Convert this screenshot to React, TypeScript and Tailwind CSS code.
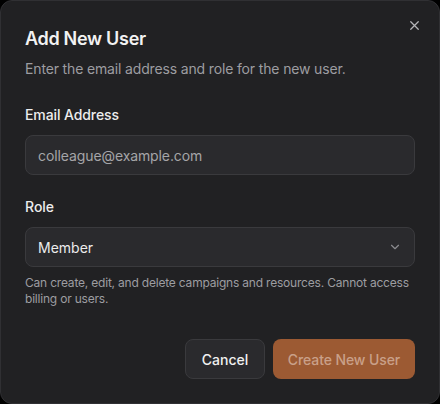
import React from "react";

export default function App() {
  return (
    <div className="w-[440px] h-[404px] bg-black" style={{ fontFamily: "Inter, 'Noto Sans', sans-serif" }}>
      <div className="relative w-full h-full rounded-[12px] border border-[#303033] bg-[#212123] px-6 pt-6 pb-6 flex flex-col">
        <button className="absolute right-[17px] top-[17px] text-[#b5b5b8]">
          <svg width="15" height="15" viewBox="0 0 24 24" fill="none" stroke="currentColor" strokeWidth="2" strokeLinecap="round">
            <path d="M18 6 6 18M6 6l12 12" />
          </svg>
        </button>
        <h2 className="text-[18px] leading-[28px] font-semibold text-[#f2f2f2] tracking-[-0.3px]">Add New User</h2>
        <p className="mt-[6px] text-[14px] leading-[20px] text-[#9d9da1] tracking-[-0.15px]">Enter the email address and role for the new user.</p>
        <label className="mt-[26px] text-[14px] leading-[20px] font-medium text-[#ededed] tracking-[-0.1px]">Email Address</label>
        <div className="mt-[10px] h-[40px] rounded-[8px] border border-[#3a3a3d] bg-[#2a2a2d] px-[12px] flex items-center text-[14px] text-[#a5a5a8] tracking-[-0.1px]">
          colleague@example.com
        </div>
        <label className="mt-[22px] text-[14px] leading-[20px] font-medium text-[#ededed]">Role</label>
        <div className="mt-[10px] h-[40px] rounded-[8px] border border-[#3a3a3d] bg-[#2a2a2d] px-[12px] flex items-center justify-between text-[14px] text-[#ececec]">
          <span>Member</span>
          <svg width="14" height="14" viewBox="0 0 24 24" fill="none" stroke="#8b8b8f" strokeWidth="2" strokeLinecap="round" strokeLinejoin="round">
            <path d="m6 9 6 6 6-6" />
          </svg>
        </div>
        <p className="mt-[8px] text-[12px] leading-[16px] text-[#9d9da1] tracking-[-0.2px]">
          Can create, edit, and delete campaigns and resources. Cannot access billing or users.
        </p>
        <div className="mt-auto flex justify-end gap-2">
          <button className="h-[40px] w-[80px] rounded-[8px] border border-[#3a3a3d] bg-[#2a2a2d] text-[14px] font-medium text-[#f0f0f0]">Cancel</button>
          <button className="h-[40px] w-[142px] rounded-[8px] bg-[#9c5a33] text-[14px] font-medium text-[#c9a089] tracking-[-0.1px]">Create New User</button>
        </div>
      </div>
    </div>
  );
}
